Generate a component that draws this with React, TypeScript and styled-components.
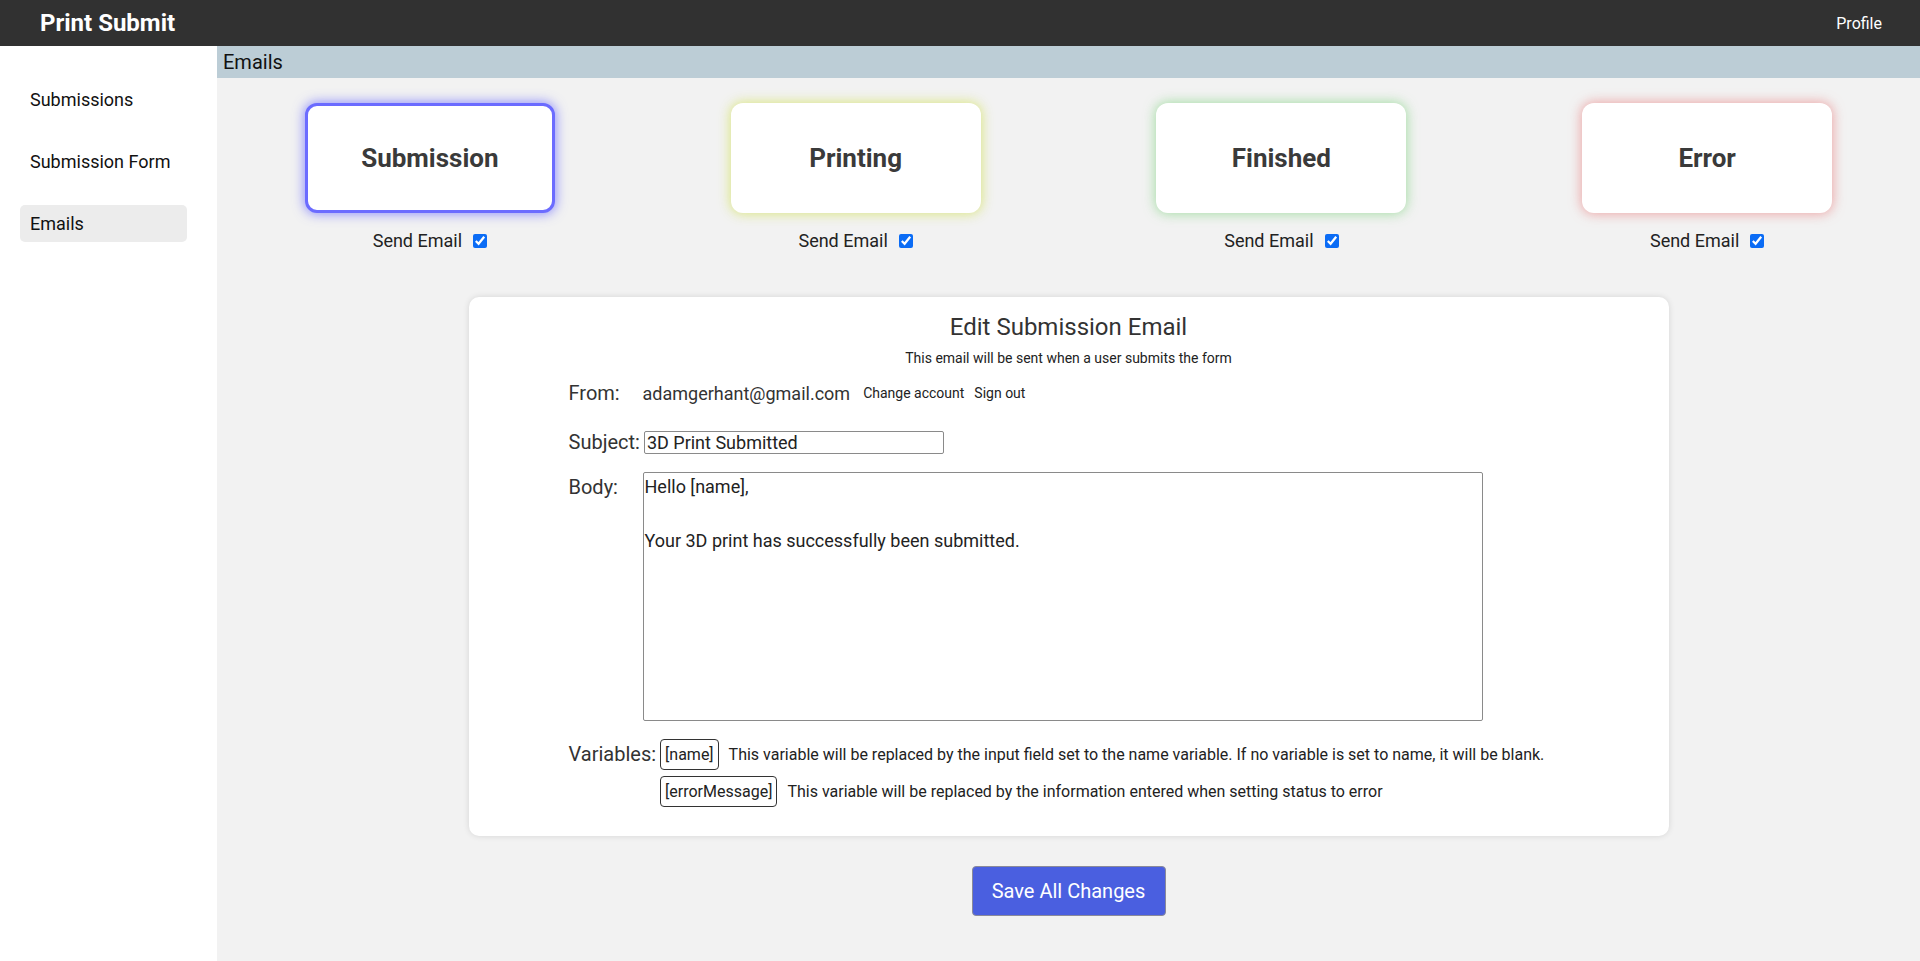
import React from "react";
import styled, { createGlobalStyle } from "styled-components";

const GlobalStyle = createGlobalStyle`
    html, body {
        margin : 0;
        padding : 0;
        font-family : Roboto, "Liberation Sans", Arial, sans-serif;
        background-color : #f2f2f2;
    }
`;

const Page = styled.div`
    display : flex;
    flex-direction : column;
    min-height : 100vh;
`;

const TopBar = styled.div`
    display : flex;
    justify-content : space-between;
    align-items : center;
    height : 46px;
    padding : 0 38px 0 40px;
    background-color : #313131;
    color : white;
`;

const Logo = styled.div`
    font-size : 24px;
    font-weight : 700;
`;

const ProfileLink = styled.div`
    font-size : 16px;
`;

const Body = styled.div`
    display : flex;
    flex : 1;
`;

const Sidebar = styled.div`
    display : flex;
    flex-direction : column;
    gap : 25px;
    width : 217px;
    padding : 35px 30px 0 20px;
    box-sizing : border-box;
    background-color : white;
`;

const NavItem = styled.div<{ $active?: boolean }>`
    display : flex;
    align-items : center;
    height : 37px;
    padding-left : 10px;
    border-radius : 5px;
    font-size : 18px;
    color : #111;
    background-color : ${(p) => (p.$active ? "#ececec" : "transparent")};
`;

const Main = styled.div`
    display : flex;
    flex-direction : column;
    align-items : center;
    flex : 1;
    padding-bottom : 45px;
`;

const SectionHeader = styled.div`
    align-self : stretch;
    height : 32px;
    line-height : 32px;
    padding-left : 6px;
    font-size : 20px;
    color : #111;
    background-color : #bccdd6;
`;

const StatusRow = styled.div`
    display : grid;
    grid-template-columns : repeat(4, 1fr);
    align-self : stretch;
    margin-top : 25px;
`;

const StatusColumn = styled.div`
    display : flex;
    flex-direction : column;
    align-items : center;
`;

const StatusCard = styled.div<{ $glow: string; $selected?: boolean }>`
    display : flex;
    justify-content : center;
    align-items : center;
    width : 250px;
    height : 110px;
    box-sizing : border-box;
    border-radius : 12px;
    border : 3px solid ${(p) => (p.$selected ? "#6b6bff" : "transparent")};
    background-color : white;
    box-shadow : 0 0 12px 1px ${(p) => p.$glow};
    font-size : 26px;
    font-weight : 700;
    color : #3a3a3a;
`;

const SendEmail = styled.label`
    display : flex;
    align-items : center;
    gap : 11px;
    margin-top : 17px;
    font-size : 18px;
    color : #222;

    input {
        width : 14px;
        height : 14px;
        margin : 0;
        accent-color : #0b6cf5;
    }
`;

const EditCard = styled.div`
    display : flex;
    flex-direction : column;
    width : 1200px;
    margin-top : 46px;
    padding : 16px 100px 29px;
    box-sizing : border-box;
    border-radius : 10px;
    background-color : white;
    box-shadow : 0 0 6px rgba(0, 0, 0, 0.12);
    color : #333;
`;

const EditTitle = styled.div`
    text-align : center;
    font-size : 24px;
    line-height : 28px;
`;

const EditSubtitle = styled.div`
    margin-top : 9px;
    text-align : center;
    font-size : 14px;
    line-height : 16px;
    color : #222;
`;

const FormRow = styled.div<{ $top: number; $align?: string }>`
    display : flex;
    align-items : ${(p) => p.$align || "center"};
    margin-top : ${(p) => p.$top}px;
`;

const FieldLabel = styled.div<{ $offset?: number }>`
    min-width : 74px;
    padding-right : 4px;
    margin-top : ${(p) => p.$offset || 0}px;
    box-sizing : border-box;
    font-size : 20px;
    line-height : 24px;
    color : #333;
`;

const FromAddress = styled.div`
    font-size : 18px;
    color : #333;
`;

const SmallLink = styled.span<{ $gap: number }>`
    margin-left : ${(p) => p.$gap}px;
    font-size : 14px;
    color : #222;
    cursor : pointer;
`;

const SubjectInput = styled.input`
    width : 300px;
    height : 23px;
    padding : 0 2px;
    box-sizing : border-box;
    border : 1px solid #8a8a8a;
    border-radius : 2px;
    font-family : inherit;
    font-size : 18px;
    color : #222;
`;

const BodyInput = styled.textarea`
    width : 840px;
    height : 249px;
    padding : 0 1px;
    box-sizing : border-box;
    border : 1px solid #8a8a8a;
    border-radius : 2px;
    resize : none;
    font-family : inherit;
    font-size : 18px;
    line-height : 27px;
    color : #222;
`;

const VariableList = styled.div`
    display : flex;
    flex-direction : column;
    gap : 6px;
`;

const VariableLine = styled.div`
    display : flex;
    align-items : center;
    gap : 10px;
`;

const VariableTag = styled.span`
    height : 31px;
    line-height : 29px;
    padding : 0 4px;
    box-sizing : border-box;
    border : 1px solid #333;
    border-radius : 4px;
    font-size : 16px;
    color : #222;
`;

const VariableText = styled.span`
    font-size : 16px;
    color : #222;
`;

const SaveButton = styled.button`
    margin-top : 30px;
    width : 194px;
    height : 50px;
    border : 1px solid #8a8a9a;
    border-radius : 4px;
    background-color : #4a5fe0;
    color : white;
    font-family : inherit;
    font-size : 20px;
    cursor : pointer;
`;

const statuses = [
    { name: "Submission", glow: "rgba(100, 100, 255, 0.7)", selected: true },
    { name: "Printing", glow: "rgba(215, 228, 110, 0.85)" },
    { name: "Finished", glow: "rgba(140, 215, 140, 0.75)" },
    { name: "Error", glow: "rgba(235, 140, 140, 0.75)" },
];

const App = () => {
    return (
        <Page>
            <GlobalStyle />
            <TopBar>
                <Logo>Print Submit</Logo>
                <ProfileLink>Profile</ProfileLink>
            </TopBar>
            <Body>
                <Sidebar>
                    <NavItem>Submissions</NavItem>
                    <NavItem>Submission Form</NavItem>
                    <NavItem $active>Emails</NavItem>
                </Sidebar>
                <Main>
                    <SectionHeader>Emails</SectionHeader>
                    <StatusRow>
                        {statuses.map((s) => (
                            <StatusColumn key={s.name}>
                                <StatusCard $glow={s.glow} $selected={s.selected}>
                                    {s.name}
                                </StatusCard>
                                <SendEmail>
                                    Send Email
                                    <input type="checkbox" defaultChecked />
                                </SendEmail>
                            </StatusColumn>
                        ))}
                    </StatusRow>
                    <EditCard>
                        <EditTitle>Edit Submission Email</EditTitle>
                        <EditSubtitle>This email will be sent when a user submits the form</EditSubtitle>
                        <FormRow $top={15}>
                            <FieldLabel>From:</FieldLabel>
                            <FromAddress>adamgerhant@gmail.com</FromAddress>
                            <SmallLink $gap={13}>Change account</SmallLink>
                            <SmallLink $gap={10}>Sign out</SmallLink>
                        </FormRow>
                        <FormRow $top={25}>
                            <FieldLabel>Subject:</FieldLabel>
                            <SubjectInput defaultValue="3D Print Submitted" />
                        </FormRow>
                        <FormRow $top={18} $align="flex-start">
                            <FieldLabel $offset={3}>Body:</FieldLabel>
                            <BodyInput
                                defaultValue={"Hello [name],\n\nYour 3D print has successfully been submitted."}
                            />
                        </FormRow>
                        <FormRow $top={18} $align="flex-start">
                            <FieldLabel $offset={3}>Variables:</FieldLabel>
                            <VariableList>
                                <VariableLine>
                                    <VariableTag>[name]</VariableTag>
                                    <VariableText>
                                        This variable will be replaced by the input field set to the name variable. If no variable is set to name, it will be blank.
                                    </VariableText>
                                </VariableLine>
                                <VariableLine>
                                    <VariableTag>[errorMessage]</VariableTag>
                                    <VariableText>
                                        This variable will be replaced by the information entered when setting status to error
                                    </VariableText>
                                </VariableLine>
                            </VariableList>
                        </FormRow>
                    </EditCard>
                    <SaveButton>Save All Changes</SaveButton>
                </Main>
            </Body>
        </Page>
    );
};

export default App;
